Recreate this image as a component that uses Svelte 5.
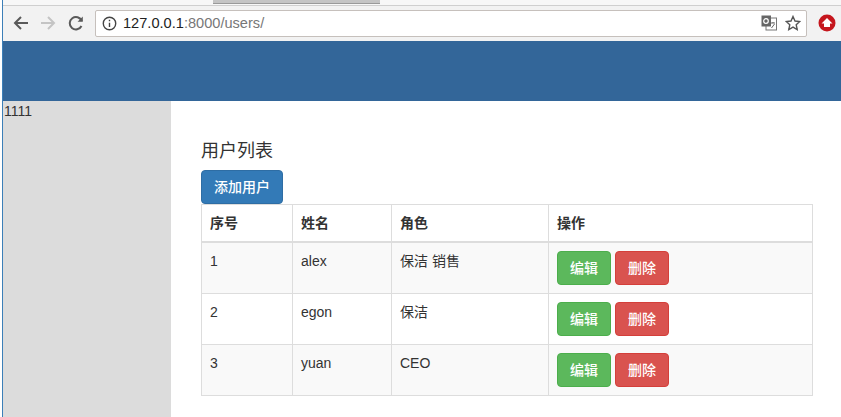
<script>
  const rows = [
    { id: 1, name: 'alex', roles: '保洁 销售' },
    { id: 2, name: 'egon', roles: '保洁' },
    { id: 3, name: 'yuan', roles: 'CEO' }
  ];
</script>

<div class="window">
  <div class="tabstrip"><div class="tab"></div></div>

  <div class="toolbar">
    <svg class="nav" width="18" height="18" viewBox="0 0 18 18" fill="none" stroke="#5a5a5a" stroke-width="2">
      <path d="M16 9H3M9 3L3 9l6 6" />
    </svg>
    <svg class="nav" width="18" height="18" viewBox="0 0 18 18" fill="none" stroke="#c4c4c4" stroke-width="2">
      <path d="M2 9h13M9 3l6 6-6 6" />
    </svg>
    <svg class="nav" width="18" height="18" viewBox="0 0 18 18" fill="none" stroke="#5a5a5a" stroke-width="2">
      <path d="M15.500 12a6.200 6.200 0 1 1 .2-5" />
      <path d="M16.800 2.500v5.200h-5.200z" fill="#5a5a5a" stroke="none" />
    </svg>
    <div class="omnibox">
      <svg class="info" width="15" height="15" viewBox="0 0 14 14" fill="none" stroke="#444" stroke-width="1.300">
        <circle cx="7" cy="7" r="5.800" />
        <path d="M7 6.200v4M7 3.600v1.400" />
      </svg>
      <span class="url"><b>127.0.0.1</b>:8000/users/</span>
      <svg class="translate" width="16" height="16" viewBox="0 0 16 16">
        <rect x="5" y="3" width="10.500" height="12" fill="#fff" stroke="#777" />
        <rect x="0.5" y="0.5" width="9.500" height="11" fill="#666" />
        <circle cx="5" cy="6" r="2.300" fill="none" stroke="#fff" stroke-width="1.200" />
        <path d="M10 8h4M12 7v1M10.500 13l3-4" stroke="#666" fill="none" />
      </svg>
      <svg class="star" width="16" height="16" viewBox="0 0 16 16" fill="none" stroke="#555" stroke-width="1.400">
        <path d="M8 1.500l2 4.500 4.800.5-3.600 3.200 1 4.800L8 12.100 3.800 14.500l1-4.800L1.200 6.500 6 6z" />
      </svg>
    </div>
    <svg class="ext" width="18" height="18" viewBox="0 0 18 18">
      <circle cx="9" cy="9" r="8.500" fill="#c5161d" />
      <path d="M9 4L14.500 9.500H12V13H6V9.500H3.500z" fill="#fff" />
    </svg>
  </div>

  <header class="navbar"></header>

  <div class="page">
    <aside class="sidebar">1111</aside>
    <main class="content">
      <h3>用户列表</h3>
      <button class="btn primary add">添加用户</button>
      <table>
        <thead>
          <tr>
            <th class="c1">序号</th>
            <th class="c2">姓名</th>
            <th class="c3">角色</th>
            <th>操作</th>
          </tr>
        </thead>
        <tbody>
          {#each rows as row}
            <tr>
              <td>{row.id}</td>
              <td>{row.name}</td>
              <td>{row.roles}</td>
              <td class="actions">
                <button class="btn success">编辑</button>
                <button class="btn danger">删除</button>
              </td>
            </tr>
          {/each}
        </tbody>
      </table>
    </main>
  </div>
</div>

<style>
  :global(body) {
    margin: 0;
    background: #fff;
    overflow: hidden;
  }

  .window {
    width: 839px;
    height: 417px;
    margin-left: 2px;
    overflow: hidden;
    font-family: "Liberation Sans", "Noto Sans CJK SC", sans-serif;
    font-size: 14px;
    line-height: 20px;
    color: #333;
    border-left: 1px solid #3c7fb8;
    box-sizing: border-box;
  }

  .tabstrip {
    height: 5px;
    background: #f7f7f7;
    padding-left: 210px;
  }

  .tab {
    width: 167px;
    height: 4px;
    background: #c4c4c4;
    border-bottom: 1px solid #999;
    box-sizing: border-box;
  }

  .toolbar {
    height: 36px;
    box-sizing: border-box;
    background: #f2f2f2;
    display: flex;
    align-items: center;
    padding: 0 0 1px 9px;
    gap: 9px;
    border-top: 1px solid #cfcfcf;
  }

  .omnibox {
    width: 712px;
    height: 27px;
    box-sizing: border-box;
    margin: 0 2px;
    background: #fff;
    border: 1px solid #c6c0bc;
    border-radius: 2px;
    display: flex;
    align-items: center;
    padding: 0 5px 0 6px;
    gap: 7px;
    flex: none;
  }

  .info {
    margin-right: -1px;
  }

  .url {
    flex: 1;
    font-size: 14.6px;
    color: #777;
    white-space: nowrap;
  }

  .url b {
    font-weight: 400;
    color: #222;
  }

  .star {
    margin-left: 1px;
  }

  .nav {
    flex: none;
  }

  .navbar {
    height: 60px;
    background: #336699;
  }

  .page {
    display: flex;
    height: 316px;
  }

  .sidebar {
    width: 168px;
    padding-left: 1px;
    background: #dcdcdc;
    flex: none;
    box-sizing: border-box;
  }

  .content {
    flex: 1;
    padding: 40px 28px 0 30px;
  }

  h3 {
    margin: 0 0 9px;
    font-size: 18px;
    font-weight: 400;
    line-height: 20px;
  }

  .btn {
    font: inherit;
    font-weight: 500;
    height: 34px;
    padding: 0 12px;
    border: 1px solid transparent;
    border-radius: 4px;
    color: #fff;
    vertical-align: middle;
  }

  .add {
    display: block;
  }

  .primary {
    background: #337ab7;
    border-color: #2e6da4;
  }

  .success {
    background: #5cb85c;
    border-color: #4cae4c;
  }

  .danger {
    background: #d9534f;
    border-color: #d43f3a;
  }

  table {
    width: 612px;
    border-collapse: collapse;
    table-layout: fixed;
  }

  th, td {
    border: 1px solid #ddd;
    padding: 8px;
    text-align: left;
    vertical-align: top;
  }

  th {
    height: 37px;
    box-sizing: border-box;
    border-bottom: 2px solid #ddd;
    vertical-align: bottom;
  }

  .c1 { width: 91px; }
  .c2 { width: 99px; }
  .c3 { width: 157px; }

  tbody tr:nth-child(odd) {
    background: #f9f9f9;
  }
</style>
